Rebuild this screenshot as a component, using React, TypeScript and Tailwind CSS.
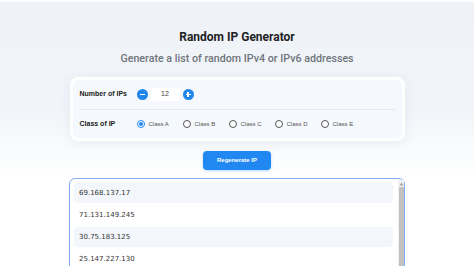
import React from "react";

const ips = ["69.168.137.17", "71.131.149.245", "30.75.183.125", "25.147.227.130"];
const classes = ["Class A", "Class B", "Class C", "Class D", "Class E"];

export default function App() {
  return (
    <div className="w-[474px] h-[266px] overflow-hidden bg-[linear-gradient(to_bottom,#ffffff_0px,#eff3f8_3px,#f1f5f9_110px,#ffffff_178px)] font-['Liberation_Sans',Arial,sans-serif]">
      <div className="flex flex-col items-center pt-[30px]">
        <h1 className="font-['Roboto',sans-serif] font-bold text-[12px] leading-[14px] text-[#222]">
          Random IP Generator
        </h1>
        <p className="mt-[8px] font-['Roboto',sans-serif] font-medium text-[10.7px] leading-[14px] text-[#6f747c]">
          Generate a list of random IPv4 or IPv6 addresses
        </p>

        <div className="mt-[11px] w-[335px] rounded-[8px] bg-white p-[3px] shadow-[0_2px_12px_rgba(30,60,110,0.07)]">
          <div className="rounded-[6px] bg-[#f5f8fc] px-[7px]">
            <div className="flex h-[29px] items-center">
              <div className="w-[57px] text-[7px] font-bold text-[#222]">Number of IPs</div>
              <button className="flex h-[11px] w-[11px] items-center justify-center rounded-full bg-[#1f86ec]">
                <span className="block h-[1.5px] w-[5px] bg-white" />
              </button>
              <div className="ml-[3px] flex h-[13px] w-[29px] items-center justify-center rounded-[2px] bg-white text-[7px] text-[#444]">
                12
              </div>
              <button className="relative ml-[3px] flex h-[11px] w-[11px] items-center justify-center rounded-full bg-[#1f86ec]">
                <span className="block h-[1.5px] w-[5px] bg-white" />
                <span className="absolute block h-[5px] w-[1.5px] bg-white" />
              </button>
            </div>
            <div className="h-px bg-[#e4e9f0]" />
            <div className="flex h-[28px] items-center">
              <div className="w-[57px] text-[7px] font-bold text-[#222]">Class of IP</div>
              {classes.map((c, i) => (
                <div key={c} className="flex w-[46px] items-center">
                  <span
                    className={
                      i === 0
                        ? "flex h-[8px] w-[8px] items-center justify-center rounded-full border border-[#1f86ec] bg-white"
                        : "h-[8px] w-[8px] rounded-full border border-[#555] bg-white"
                    }
                  >
                    {i === 0 && <span className="block h-[4px] w-[4px] rounded-full bg-[#1f86ec]" />}
                  </span>
                  <span className="ml-[4px] text-[6px] text-[#555]">{c}</span>
                </div>
              ))}
            </div>
          </div>
        </div>

        <button className="mt-[10px] h-[19px] w-[68px] rounded-[4px] bg-[#2088f0] text-[6px] font-bold text-white shadow-[0_1px_3px_rgba(32,136,240,0.3)]">
          Regenerate IP
        </button>

        <div className="mt-[8px] flex h-[100px] w-[336px] rounded-[6px] border border-[#80b0ef] bg-white pl-[4px] pt-[4px]">
          <div className="flex flex-1 flex-col gap-[2px]">
            {ips.map((ip, i) => (
              <div
                key={ip}
                className={
                  i % 2 === 0
                    ? "flex h-[20px] shrink-0 items-center rounded-[4px] bg-[#f3f7fc] px-[5px] font-['DejaVu_Sans',Verdana,sans-serif] text-[7px] text-[#333]"
                    : "flex h-[20px] shrink-0 items-center rounded-[4px] bg-white px-[5px] font-['DejaVu_Sans',Verdana,sans-serif] text-[7px] text-[#333]"
                }
              >
                {ip}
              </div>
            ))}
          </div>
          <div className="ml-[5px] mt-[-3px] flex w-[6px] flex-col bg-[#f1f1f1]">
            <div className="flex h-[7px] items-center justify-center">
              <svg width="5" height="4" viewBox="0 0 5 4">
                <path d="M2.5 0.5 L4.5 3.5 L0.5 3.5 Z" fill="#a3a3a3" />
              </svg>
            </div>
            <div className="mx-auto w-[5px] flex-1 rounded-[1px] bg-[#c1c1c1]" />
          </div>
        </div>
      </div>
    </div>
  );
}
